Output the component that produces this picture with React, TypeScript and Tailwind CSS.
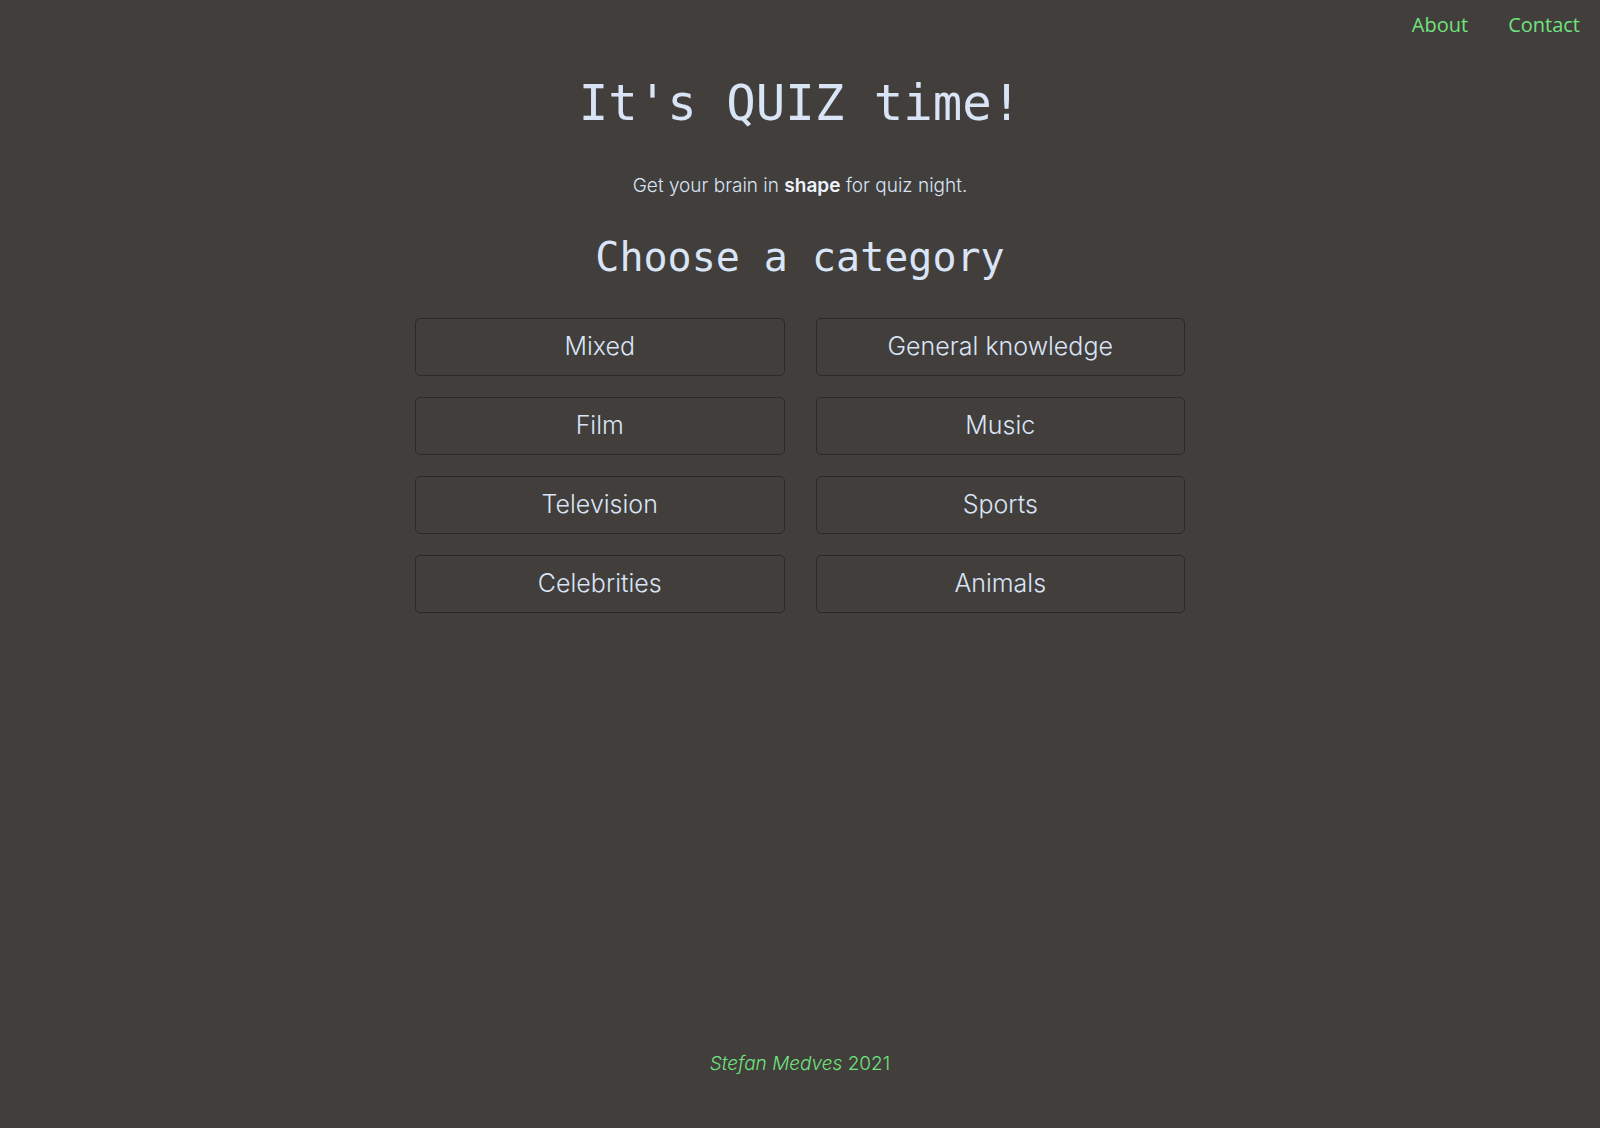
import React from 'react';

const categories = [
  'Mixed',
  'General knowledge',
  'Film',
  'Music',
  'Television',
  'Sports',
  'Celebrities',
  'Animals',
];

const mono = "font-['DejaVu_Sans_Mono','Liberation_Mono',monospace]";
const body = "font-['Inter','Lato',sans-serif]";

export default function App() {
  return (
    <div className={`min-h-screen flex flex-col bg-[#423e3b] text-[#d9e4f6] ${body}`}>
      <nav className="flex justify-end gap-10 pr-5 pt-[10px] font-['Open_Sans',sans-serif] text-[20px] text-[#6fe37f]">
        <a href="#">About</a>
        <a href="#">Contact</a>
      </nav>

      <main className="flex flex-col items-center">
        <h1 className={`${mono} text-[49px] font-extralight leading-none mt-[39px]`}>It's QUIZ time!</h1>
        <p className="text-[19px] font-light mt-[44px]">
          Get your brain in <strong className="font-semibold text-[#eef3fb]">shape</strong> for quiz night.
        </p>
        <h2 className={`${mono} text-[40px] font-extralight leading-none mt-[36px]`}>Choose a category</h2>

        <div className="grid grid-cols-2 gap-x-[31px] gap-y-[21px] w-[770px] mt-[41px]">
          {categories.map((c) => (
            <button
              key={c}
              className="h-[58px] rounded-[5px] border border-[#2a292c] text-[25px] font-light text-[#d9e4f6]"
            >
              {c}
            </button>
          ))}
        </div>
      </main>

      <footer className="mt-auto pb-[50px] text-center text-[19px] font-light text-[#6fe37f]">
        <em>Stefan Medves</em> 2021
      </footer>
    </div>
  );
}
